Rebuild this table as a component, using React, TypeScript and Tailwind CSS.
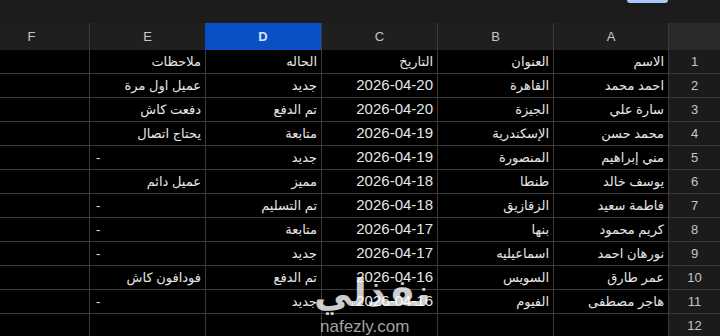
import React from "react";

/* Google Sheets (dark, RTL) — orders sheet with a watermark on top */

const COLS = ["A", "B", "C", "D", "E", "F"];

type Row = [string, string, string, string, string];

const ROWS: Row[] = [
  ["الاسم", "العنوان", "التاريخ", "الحاله", "ملاحظات"],
  ["احمد محمد", "القاهرة", "2026-04-20", "جديد", "عميل اول مرة"],
  ["سارة علي", "الجيزة", "2026-04-20", "تم الدفع", "دفعت كاش"],
  ["محمد حسن", "الإسكندرية", "2026-04-19", "متابعة", "يحتاج اتصال"],
  ["مني إبراهيم", "المنصورة", "2026-04-19", "جديد", "-"],
  ["يوسف خالد", "طنطا", "2026-04-18", "مميز", "عميل دائم"],
  ["فاطمة سعيد", "الزقازيق", "2026-04-18", "تم التسليم", "-"],
  ["كريم محمود", "بنها", "2026-04-17", "متابعة", "-"],
  ["نورهان احمد", "اسماعيليه", "2026-04-17", "جديد", "-"],
  ["عمر طارق", "السويس", "2026-04-16", "تم الدفع", "فودافون كاش"],
  ["هاجر مصطفى", "الفيوم", "2026-04-16", "جديد", "-"],
  ["", "", "", "", ""],
];

const line = "border-b border-l border-[#3b3b3b]";

export default function App() {
  return (
    <div
      dir="rtl"
      className="relative h-[336px] w-[720px] overflow-hidden bg-black font-['Liberation_Sans','DejaVu_Sans',sans-serif] text-[#e6e6e6]"
    >
      {/* toolbar edge with the bottom of the share pill peeking in */}
      <div className="flex h-[23px] bg-[#1c1c1c]">
        <div className="ms-[52px] h-[3px] w-[41px] rounded-b-[6px] bg-[#a8c7fa]" />
      </div>

      <div className="grid w-max grid-cols-[52px_115px_116px_116px_116px_116px_116px]">
        {/* column headers */}
        <div className="h-[27px] border-l border-[#3b3b3b] bg-[#2b2b2b]" />
        {COLS.map((c) =>
          c === "D" ? (
            <div key={c} className="flex h-[27px] items-center justify-center bg-[#0b4fc4] text-[13px] font-bold text-[#d3e3fd]">
              {c}
            </div>
          ) : (
            <div key={c} className="flex h-[27px] items-center justify-center border-l border-[#3b3b3b] bg-[#1f1f1f] text-[13px] text-[#c4c7c5]">
              {c}
            </div>
          )
        )}

        {/* rows */}
        {ROWS.map((r, i) => (
          <React.Fragment key={i}>
            <div className={`flex h-[24px] items-center justify-center bg-[#1b1b1b] text-[13px] text-[#c4c7c5] ${line}`}>{i + 1}</div>
            {r.map((v, j) => (
              <div
                key={j}
                className={`flex h-[24px] items-center overflow-hidden whitespace-nowrap px-[4px] ${line} ${
                  v === "-" ? "justify-end pl-[6px]" : "justify-start"
                } ${j === 2 && i > 0 ? "text-[15px]" : "text-[13px]"}`}
              >
                {v}
              </div>
            ))}
            <div className={`h-[24px] ${line}`} />
          </React.Fragment>
        ))}
      </div>

      {/* watermark */}
      <div dir="rtl" className="pointer-events-none absolute left-[314px] top-[274px] text-[38px] font-bold leading-none text-white/80">
        نفذلي
      </div>
      <div dir="ltr" className="pointer-events-none absolute left-[320px] top-[318px] text-[17px] leading-none text-[#cfcfcf]/80">
        nafezly.com
      </div>
    </div>
  );
}
